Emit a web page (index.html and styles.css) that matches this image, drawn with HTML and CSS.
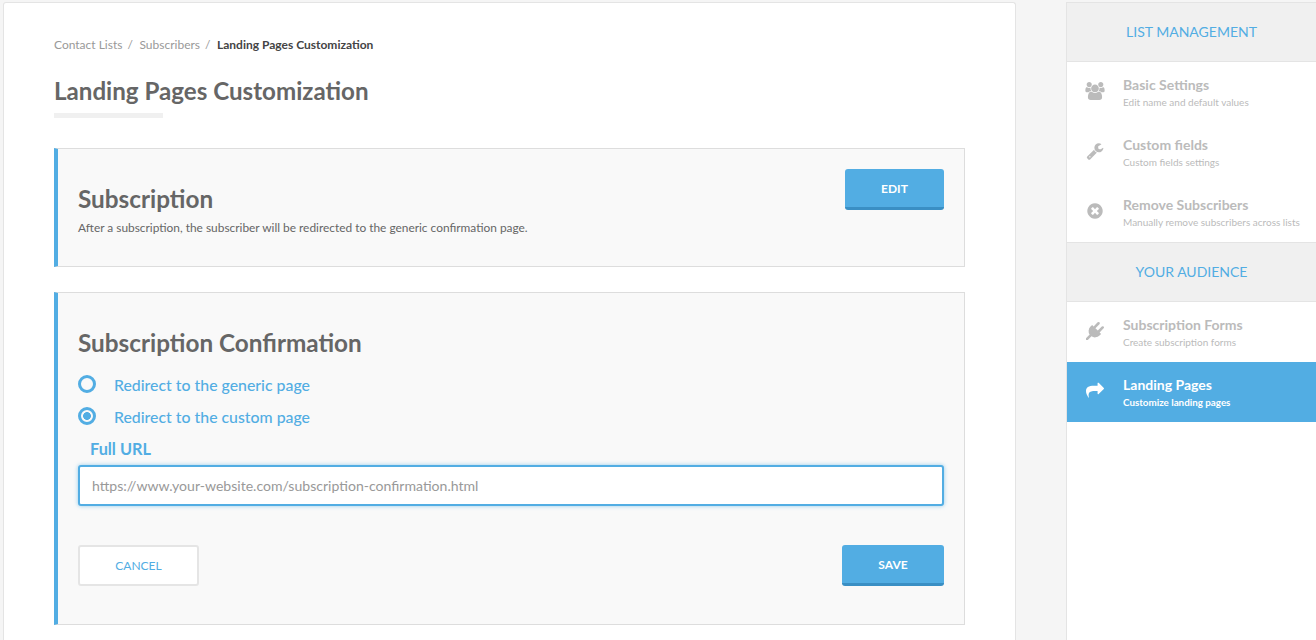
FILE: index.html
```html
<!DOCTYPE html>
<html lang="en">
<head>
    <meta charset="UTF-8">
    <meta name="viewport" content="width=device-width, initial-scale=1.0">
    <title>Landing Pages Customization</title>
    <link rel="stylesheet" href="styles.css">
</head>
<body>
    <div class="page">
        <main class="content">
            <div class="breadcrumb">
                <a href="#">Contact Lists</a><span class="sep">/</span>
                <a href="#">Subscribers</a><span class="sep">/</span>
                <strong>Landing Pages Customization</strong>
            </div>
            <h1>Landing Pages Customization</h1>
            <div class="title-rule"></div>

            <section class="panel panel-short">
                <div>
                    <h2>Subscription</h2>
                    <p>After a subscription, the subscriber will be redirected to the generic confirmation page.</p>
                </div>
                <button class="btn btn-edit">EDIT</button>
            </section>

            <section class="panel panel-form">
                <h2>Subscription Confirmation</h2>
                <label class="radio"><span class="radio-mark"></span>Redirect to the generic page</label>
                <label class="radio"><span class="radio-mark radio-on"></span>Redirect to the custom page</label>
                <label class="url-label" for="full_url">Full URL</label>
                <input class="url-input" id="full_url" type="text" placeholder="https://www.your-website.com/subscription-confirmation.html">
                <div class="actions">
                    <button class="btn-cancel">CANCEL</button>
                    <button class="btn btn-save">SAVE</button>
                </div>
            </section>
        </main>

        <aside class="sidebar">
            <div class="side-head">LIST MANAGEMENT</div>
            <a class="side-item" href="#">
                <svg class="side-icon" viewBox="0 0 1920 1792"><path d="M593 896q-162 5-265 128h-134q-82 0-138-40.500t-56-118.500q0-353 124-353 6 0 43.500 21t97.500 42.500 119 21.500q67 0 133-23-5 37-5 66 0 139 81 256zm1071 637q0 120-73 189.500t-194 69.500h-874q-121 0-194-69.500t-73-189.500q0-53 3.500-103.500t14-109 26.500-108.500 43-97.500 62-81 85.500-53.500 111.500-20q10 0 43 21.500t73 48 107 48 135 21.500 135-21.500 107-48 73-48 43-21.500q61 0 111.500 20t85.500 53.500 62 81 43 97.500 26.500 108.500 14 109 3.500 103.500zm-1024-1277q0 106-75 181t-181 75-181-75-75-181 75-181 181-75 181 75 75 181zm704 384q0 159-112.500 271.500t-271.500 112.500-271.500-112.500-112.500-271.500 112.500-271.500 271.500-112.500 271.500 112.500 112.500 271.500zm576 225q0 78-56 118.500t-138 40.500h-134q-103-123-265-128 81-117 81-256 0-29-5-66 66 23 133 23 59 0 119-21.500t97.500-42.500 43.500-21q124 0 124 353zm-128-609q0 106-75 181t-181 75-181-75-75-181 75-181 181-75 181 75 75 181z"/></svg>
                <span class="side-text"><b>Basic Settings</b><small>Edit name and default values</small></span>
            </a>
            <a class="side-item" href="#">
                <svg class="side-icon" viewBox="0 0 1792 1792"><path fill-rule="evenodd" d="M448 1472q0-26-19-45t-45-19-45 19-19 45 19 45 45 19 45-19 19-45zm644-420l-682 682q-37 37-90 37-52 0-91-37l-106-108q-38-36-38-90 0-53 38-91l681-681q39 98 114.500 173.500t173.500 114.500zm634-435q0 39-23 106-47 134-164.500 217.500t-258.500 83.500q-185 0-316.500-131.500t-131.500-316.500 131.500-316.500 316.500-131.500q58 0 121.500 16.500t107.500 46.500q16 11 16 28t-16 28l-293 169v224l193 107q5-3 79-48.500t135.500-81 70.500-35.500q15 0 23.500 10t8.500 25z"/></svg>
                <span class="side-text"><b>Custom fields</b><small>Custom fields settings</small></span>
            </a>
            <a class="side-item" href="#">
                <svg class="side-icon" viewBox="0 0 1792 1792"><path d="M1277 1122q0-26-19-45l-181-181 181-181q19-19 19-45 0-27-19-46l-90-90q-19-19-46-19-26 0-45 19l-181 181-181-181q-19-19-45-19-27 0-46 19l-90 90q-19 19-19 46 0 26 19 45l181 181-181 181q-19 19-19 45 0 27 19 46l90 90q19 19 46 19 26 0 45-19l181-181 181 181q19 19 45 19 27 0 46-19l90-90q19-19 19-46zm387-226q0 209-103 385.500t-279.500 279.500-385.500 103-385.500-103-279.500-279.500-103-385.500 103-385.500 279.500-279.500 385.500-103 385.500 103 279.500 279.500 103 385.500z"/></svg>
                <span class="side-text"><b>Remove Subscribers</b><small>Manually remove subscribers across lists</small></span>
            </a>
            <div class="side-head">YOUR AUDIENCE</div>
            <a class="side-item" href="#">
                <svg class="side-icon" viewBox="0 0 1792 1792"><path d="M1755 453q37 38 37 90.500t-37 90.500l-401 400 150 150-160 160q-163 163-389.500 186.500t-411.500-100.500l-362 362h-181v-181l362-362q-124-185-100.500-411.500t186.500-389.500l160-160 150 150 400-401q38-37 91-37t90 37 37 90.500-37 90.500l-400 401 234 234 401-400q38-37 91-37t90 37z"/></svg>
                <span class="side-text"><b>Subscription Forms</b><small>Create subscription forms</small></span>
            </a>
            <a class="side-item active" href="#">
                <svg class="side-icon" viewBox="0 0 1792 1792"><path d="M1792 640Q1792 666 1773 685L1261 1197Q1242 1216 1216 1216Q1190 1216 1171 1197Q1152 1178 1152 1152V896H928C600 896 384 930 300 1100C250 1200 250 1360 280 1500Q290 1540 270 1560Q250 1570 235 1550C100 1300 0 1150 0 896C0 560 250 384 800 384H1152V128Q1152 102 1171 83Q1190 64 1216 64Q1242 64 1261 83L1773 595Q1792 614 1792 640Z"/></svg>
                <span class="side-text"><b>Landing Pages</b><small>Customize landing pages</small></span>
            </a>
        </aside>
    </div>
</body>
</html>
```

FILE: styles.css
```css
* {
    box-sizing: border-box;
}
html, body {
    height: 100%;
}
body {
    margin: 0;
    font-family: Lato, "Open Sans", sans-serif;
    background-color: #f5f5f5;
    color: #666;
    overflow: hidden;
}
a {
    text-decoration: none;
}
.page {
    display: flex;
    align-items: flex-start;
    height: 640px;
    padding: 2px 0 0 3px;
}
.content {
    width: 1013px;
    height: 638px;
    flex-shrink: 0;
    padding: 35px 50px 0 50px;
    background: white;
    border: 1px solid #e4e4e4;
    border-bottom: none;
    border-radius: 3px 3px 0 0;
}
.breadcrumb {
    font-size: 12px;
    line-height: 14px;
    color: #999;
}
.breadcrumb a {
    color: #999;
}
.breadcrumb .sep {
    margin: 0 3.5px 0 5px;
}
.breadcrumb strong {
    color: #444;
}
h1 {
    margin: 22px 0 0;
    font-size: 24.15px;
    line-height: 34px;
    font-weight: 700;
    color: #666;
}
.title-rule {
    width: 109px;
    height: 5px;
    margin-top: 5px;
    background: #f0f0f0;
}
.panel {
    width: 911px;
    background: #f9f9f9;
    border: 1px solid #ddd;
    border-left: 4px solid #52ade3;
}
.panel h2 {
    margin: 0;
    font-size: 24.3px;
    line-height: 34px;
    font-weight: 700;
    color: #666;
}
.panel-short {
    display: flex;
    justify-content: space-between;
    align-items: flex-start;
    height: 119px;
    margin-top: 30px;
    padding: 20px 20px 0;
}
.panel-short h2 {
    margin-top: 13px;
}
.panel-short p {
    margin: 4px 0 0;
    font-size: 11.9px;
    line-height: 16px;
    color: #666;
}
.panel-form {
    height: 333px;
    margin-top: 25px;
    padding: 33px 20px 0;
}
.btn {
    height: 41px;
    padding: 0;
    background: #52ade3;
    color: white;
    border: none;
    border-bottom: 3px solid #3a8fc4;
    border-radius: 3px;
    font-family: inherit;
    font-size: 12px;
    font-weight: 700;
}
.btn-edit {
    width: 99px;
}
.btn-save {
    width: 102px;
}
.radio {
    display: flex;
    align-items: center;
    height: 32px;
    font-size: 15.85px;
    font-weight: 500;
    color: #52ade3;
}
.panel-form h2 + .radio {
    margin-top: 8px;
}
.radio-mark {
    width: 18px;
    height: 18px;
    margin-right: 18px;
    border: 3.5px solid #52ade3;
    border-radius: 50%;
    background: #f9f9f9;
}
.radio-on {
    background: radial-gradient(circle, #52ade3 0, #52ade3 3.6px, #f9f9f9 4.2px);
}
.url-label {
    display: block;
    margin: 7px 0 6px 12px;
    font-size: 16.3px;
    line-height: 20px;
    font-weight: 700;
    color: #52ade3;
}
.url-input {
    display: block;
    width: 866px;
    height: 41px;
    padding: 0 12px;
    background: white;
    border: 2px solid #52ade3;
    border-radius: 3px;
    box-shadow: 0 0 4px rgba(82,173,227,0.6);
    font-family: inherit;
    font-size: 14.07px;
    outline: none;
}
.url-input::placeholder {
    color: #999;
    opacity: 1;
}
.actions {
    display: flex;
    justify-content: space-between;
    align-items: flex-start;
    width: 866px;
    margin-top: 39px;
}
.btn-cancel {
    width: 121px;
    height: 41px;
    padding: 0;
    background: white;
    border: 2px solid #e5e5e5;
    border-radius: 3px;
    color: #52ade3;
    font-family: inherit;
    font-size: 12px;
}
.sidebar {
    width: 250px;
    height: 638px;
    flex-shrink: 0;
    margin-left: 50px;
    background: white;
    border-left: 1px solid #e4e4e4;
}
.side-head {
    height: 60px;
    line-height: 58px;
    text-align: center;
    font-size: 14px;
    color: #52ade3;
    background: #f0f0f0;
    border-top: 1px solid #e4e4e4;
    border-bottom: 1px solid #e4e4e4;
}
.side-item {
    display: flex;
    align-items: center;
    height: 60px;
    padding: 1px 0 0 18px;
    color: #bbb;
}
.side-icon {
    width: 20px;
    height: 18px;
    margin: 0 18px 4px 0;
    fill: #bbb;
    flex-shrink: 0;
}
.side-text b {
    display: block;
    font-size: 14px;
    line-height: 18px;
}
.side-text small {
    display: block;
    margin-top: 1px;
    font-size: 10px;
    line-height: 14px;
}
.side-item.active {
    background: #52ade3;
    color: white;
}
.side-item.active .side-icon {
    fill: white;
}
.side-item.active small {
    font-weight: 700;
    font-size: 9.8px;
}
```
